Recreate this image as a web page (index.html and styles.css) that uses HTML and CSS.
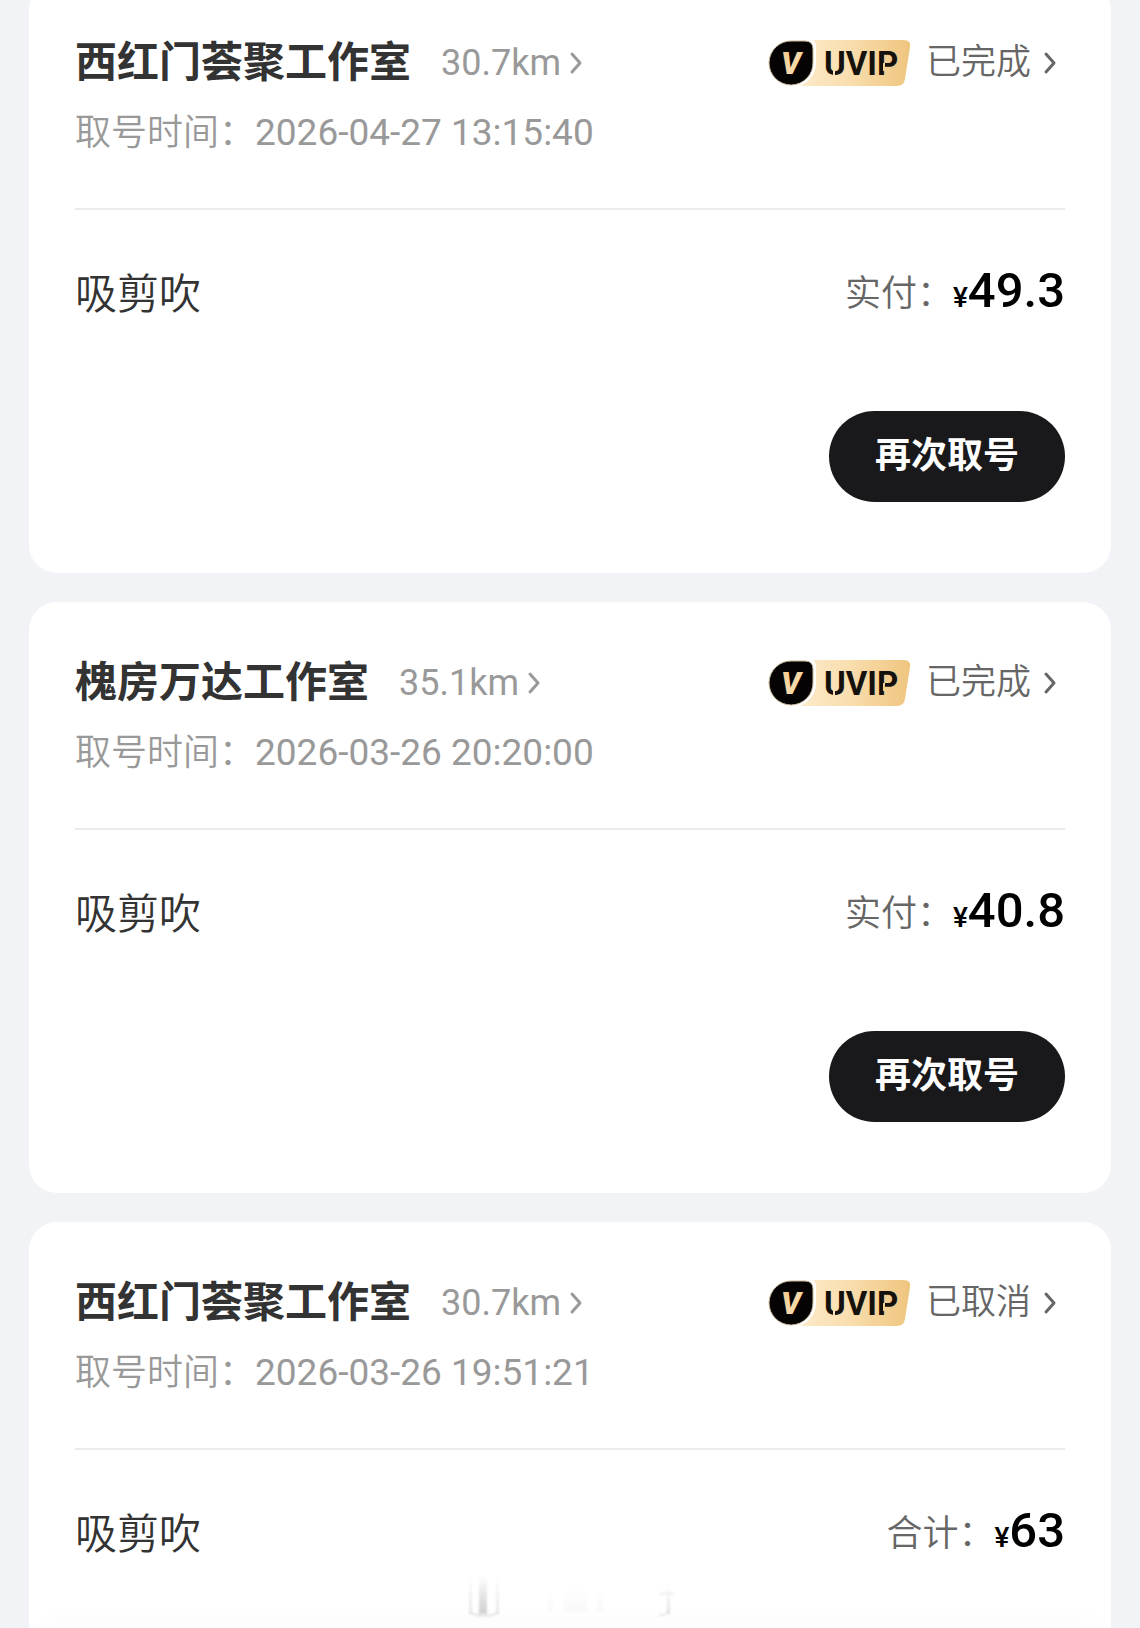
FILE: index.html
```html
<!DOCTYPE html>
<html lang="zh-CN">
<head>
<meta charset="utf-8">
<meta name="viewport" content="width=device-width, initial-scale=1">
<title>取号记录</title>
<link rel="stylesheet" href="styles.css">
</head>
<body>
<svg class="defs" width="0" height="0" aria-hidden="true">
  <defs>
    <linearGradient id="gold" x1="0" y1="0" x2="1" y2="0">
      <stop offset="0" stop-color="#fdebcb"/>
      <stop offset="0.45" stop-color="#f9deaf"/>
      <stop offset="1" stop-color="#efc57f"/>
    </linearGradient>
    <linearGradient id="mark" x1="0" y1="0" x2="1" y2="1">
      <stop offset="0" stop-color="#f3c88a"/>
      <stop offset="1" stop-color="#fbe6c0"/>
    </linearGradient>
    <linearGradient id="fade" x1="0" y1="0" x2="0" y2="1">
      <stop offset="0" stop-color="#bbb" stop-opacity="0"/>
      <stop offset="1" stop-color="#bbb"/>
    </linearGradient>
    <symbol id="uvip" viewBox="0 0 144 48">
      <path fill="url(#gold)" d="M30 1H136Q143 1 142 8L137 40Q136 47 129 47H30Z"/>
      <path fill="#fff" d="M24 0H40Q48 0 48 8V24A24 24 0 1 1 24 0Z"/>
      <path fill="#050303" stroke="#c9b79a" d="M24 2H37Q45 2 45 10V23A22 22 0 1 1 24 2Z"/>
      <text class="uvip-mark" x="13" y="35" fill="url(#mark)">V</text>
      <text class="uvip-word" x="56" y="36">UVIP</text>
      <path stroke="#f9dfb3" stroke-width="2" d="M66 30V38"/>
      <path stroke="#f3cf92" stroke-width="2" d="M116 24V32"/>
    </symbol>
    <symbol id="chevron" viewBox="0 0 14 24">
      <path fill="none" stroke="currentColor" stroke-width="3" stroke-linecap="round" stroke-linejoin="round" d="M3 3L11 12L3 21"/>
    </symbol>
  </defs>
</svg>
<main class="orders">
  <article class="card">
    <header class="head">
      <h2 class="shop">西红门荟聚工作室</h2>
      <a class="distance" href="#">30.7km<svg class="chevron"><use href="#chevron"/></svg></a>
      <svg class="uvip" role="img" aria-label="UVIP"><use href="#uvip"/></svg>
      <a class="status" href="#">已完成<svg class="chevron"><use href="#chevron"/></svg></a>
    </header>
    <p class="time">取号时间：<time class="stamp">2026-04-27 13:15:40</time></p>
    <div class="item">
      <span class="service">吸剪吹</span>
      <span class="label">实付：</span>
      <span class="price"><small class="yen">¥</small>49.3</span>
    </div>
    <button class="again" type="button">再次取号</button>
  </article>

  <article class="card">
    <header class="head">
      <h2 class="shop">槐房万达工作室</h2>
      <a class="distance" href="#">35.1km<svg class="chevron"><use href="#chevron"/></svg></a>
      <svg class="uvip" role="img" aria-label="UVIP"><use href="#uvip"/></svg>
      <a class="status" href="#">已完成<svg class="chevron"><use href="#chevron"/></svg></a>
    </header>
    <p class="time">取号时间：<time class="stamp">2026-03-26 20:20:00</time></p>
    <div class="item">
      <span class="service">吸剪吹</span>
      <span class="label">实付：</span>
      <span class="price"><small class="yen">¥</small>40.8</span>
    </div>
    <button class="again" type="button">再次取号</button>
  </article>

  <article class="card card-last">
    <header class="head">
      <h2 class="shop">西红门荟聚工作室</h2>
      <a class="distance" href="#">30.7km<svg class="chevron"><use href="#chevron"/></svg></a>
      <svg class="uvip" role="img" aria-label="UVIP"><use href="#uvip"/></svg>
      <a class="status" href="#">已取消<svg class="chevron"><use href="#chevron"/></svg></a>
    </header>
    <p class="time">取号时间：<time class="stamp">2026-03-26 19:51:21</time></p>
    <div class="item">
      <span class="service">吸剪吹</span>
      <span class="label">合计：</span>
      <span class="price"><small class="yen">¥</small>63</span>
    </div>
  </article>
</main>
<div class="sheet"></div>
<svg class="ghost" viewBox="0 0 220 48" aria-hidden="true">
  <path fill="url(#fade)" d="M16 6H24V44H16Z"/>
  <path fill="url(#fade)" opacity="0.5" d="M6 6H9V44H6ZM33 6H36V44H33Z"/>
  <path fill="none" stroke="#b5b5b5" stroke-width="1" d="M7 43Q21 49 35 43"/>
  <path fill="url(#fade)" opacity="0.12" d="M84 18H90V42H84ZM100 18H124V42H100ZM134 18H140V42H134Z"/>
  <path fill="url(#fade)" opacity="0.6" d="M204 14H207V44H204Z"/>
  <path fill="none" stroke="#c4c4c4" stroke-width="1" d="M196 45Q203 46 205 41"/>
  <path fill="#eee" d="M196 22H212V25H196Z"/>
</svg>
</body>
</html>
```
FILE: styles.css
```css
* {
  box-sizing: border-box;
}

body {
  margin: 0;
  min-height: 100vh;
  display: flex;
  flex-direction: column;
  background: #f2f3f7;
  color: #333;
  font-family: Roboto, "Noto Sans CJK SC", sans-serif;
}

.defs {
  position: absolute;
}

/* The list is scrolled slightly past the top of its first card. */
.orders {
  flex: 1;
  display: flex;
  flex-direction: column;
  gap: 29px;
  margin-top: -18px;
  padding: 0 29px;
}

.card {
  display: flex;
  flex-direction: column;
  padding: 51px 46px 71px;
  border-radius: 28px;
  background: #fff;
}

.card-last {
  flex: 1;
  padding-bottom: 60px;
  border-radius: 28px 28px 0 0;
}

.head {
  display: flex;
  align-items: center;
  height: 60px;
}

.shop {
  margin: 0;
  font-size: 42px;
  line-height: 60px;
  font-weight: 700;
}

.distance,
.status {
  display: flex;
  align-items: center;
  text-decoration: none;
  line-height: 60px;
}

.distance {
  gap: 8px;
  margin-left: 30px;
  color: #999;
  font-size: 36px;
  font-weight: 400;
}

.status {
  gap: 12px;
  margin-left: 14px;
  padding-right: 8px;
  color: #666;
  font-size: 35px;
  font-weight: 350;
}

.chevron {
  width: 14px;
  height: 24px;
}

.uvip {
  width: 144px;
  height: 48px;
  margin-left: auto;
}

.uvip-mark {
  font: italic 900 31px Roboto, sans-serif;
}

.uvip-word {
  font: 700 33px Roboto, sans-serif;
  fill: #15110c;
}

.time {
  margin: 14px 0 0;
  padding-bottom: 49px;
  border-bottom: 2px solid #ebebeb;
  color: #999;
  font-size: 36px;
  line-height: 52px;
  font-weight: 350;
}

.stamp {
  font-size: 37px;
  font-weight: 400;
}

.item {
  display: flex;
  align-items: center;
  height: 64px;
  margin-top: 48px;
}

.service {
  margin-right: auto;
  font-size: 42px;
  font-weight: 350;
}

.label {
  color: #666;
  font-size: 36px;
  font-weight: 350;
}

.price {
  color: #000;
  font-size: 49px;
  font-weight: 500;
}

.yen {
  font-size: 28px;
}

.again {
  align-self: flex-end;
  margin-top: 89px;
  padding: 0 46px;
  border: 0;
  border-radius: 46px;
  background: #19191c;
  color: #fff;
  font-family: inherit;
  font-size: 36px;
  font-weight: 700;
  line-height: 91px;
}

/* Top edge of the sheet docked under the list. */
.sheet {
  position: fixed;
  right: 44px;
  bottom: 0;
  left: 44px;
  height: 4px;
  border-radius: 28px 28px 0 0;
  background: #fff;
  box-shadow: 0 0 24px rgba(0, 0, 0, 0.08);
}

.ghost {
  position: fixed;
  bottom: 10px;
  left: 463px;
  width: 220px;
  height: 48px;
  opacity: 0.7;
  filter: blur(1px);
}
```
